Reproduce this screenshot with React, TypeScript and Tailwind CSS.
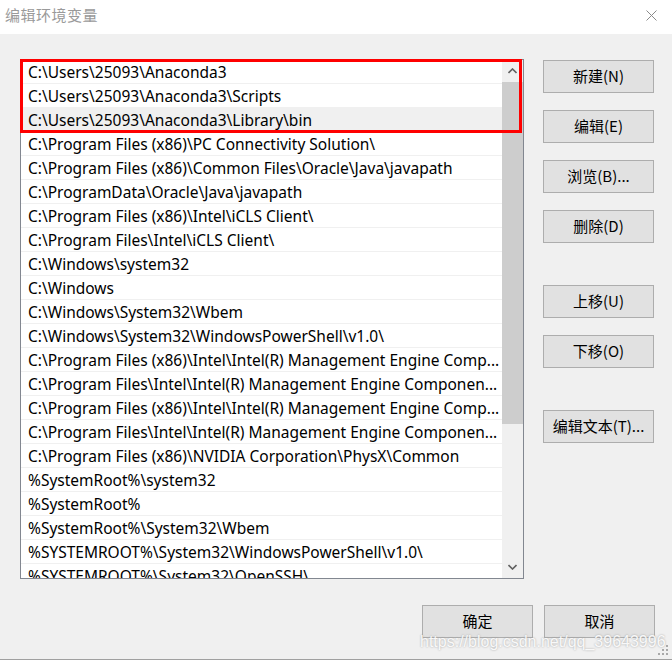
import React from "react";

const rows = [
  "C:\\Users\\25093\\Anaconda3",
  "C:\\Users\\25093\\Anaconda3\\Scripts",
  "C:\\Users\\25093\\Anaconda3\\Library\\bin",
  "C:\\Program Files (x86)\\PC Connectivity Solution\\",
  "C:\\Program Files (x86)\\Common Files\\Oracle\\Java\\javapath",
  "C:\\ProgramData\\Oracle\\Java\\javapath",
  "C:\\Program Files (x86)\\Intel\\iCLS Client\\",
  "C:\\Program Files\\Intel\\iCLS Client\\",
  "C:\\Windows\\system32",
  "C:\\Windows",
  "C:\\Windows\\System32\\Wbem",
  "C:\\Windows\\System32\\WindowsPowerShell\\v1.0\\",
  "C:\\Program Files (x86)\\Intel\\Intel(R) Management Engine Comp...",
  "C:\\Program Files\\Intel\\Intel(R) Management Engine Componen...",
  "C:\\Program Files (x86)\\Intel\\Intel(R) Management Engine Comp...",
  "C:\\Program Files\\Intel\\Intel(R) Management Engine Componen...",
  "C:\\Program Files (x86)\\NVIDIA Corporation\\PhysX\\Common",
  "%SystemRoot%\\system32",
  "%SystemRoot%",
  "%SystemRoot%\\System32\\Wbem",
  "%SYSTEMROOT%\\System32\\WindowsPowerShell\\v1.0\\",
  "%SYSTEMROOT%\\System32\\OpenSSH\\",
];

function Btn({ label, className = "" }: { label: string; className?: string }) {
  return (
    <div
      className={
        "w-[111px] h-[33px] border border-[#adadad] bg-[#e1e1e1] flex items-center justify-center text-[15px] text-black " +
        className
      }
    >
      {label}
    </div>
  );
}

export default function App() {
  return (
    <div
      className="relative w-[672px] h-[660px] bg-[#f0f0f0] border-b border-[#a0a0a0] overflow-hidden"
      style={{ fontFamily: "'Noto Sans', 'Noto Sans CJK SC', sans-serif" }}
    >
      {/* Title bar */}
      <div className="h-[34px] bg-white flex items-center justify-between pl-[5px] pr-[15px]">
        <span
          className="text-[15px] text-[#9a9a9a] tracking-[0.5px] mb-[3px]"
          style={{ fontFamily: "'Noto Sans CJK SC', sans-serif" }}
        >
          编辑环境变量
        </span>
        <svg width="11" height="11" viewBox="0 0 11 11" className="mb-[3px]">
          <path d="M0.5 0.5 L10.5 10.5 M10.5 0.5 L0.5 10.5" stroke="#8a8a8a" strokeWidth="1" />
        </svg>
      </div>

      <div className="flex">
        {/* List */}
        <div className="relative ml-[20px] mt-[25px] w-[504px] h-[520px] border border-[#828790] bg-white flex">
          <div className="w-[481px] h-full overflow-hidden">
            {rows.map((r, i) => (
              <div
                key={i}
                className={
                  "h-[24px] border-b border-[#f0f0f0] pl-[7px] pt-[1px] text-[15.5px] leading-[23px] text-black whitespace-nowrap overflow-hidden " +
                  (i === 2 ? "bg-[#f0f0f0]" : "bg-white")
                }
              >
                {r}
              </div>
            ))}
          </div>
          {/* Scrollbar */}
          <div className="w-[21px] h-full bg-[#f0f0f0] flex flex-col">
            <div className="h-[22px] flex items-center justify-center">
              <svg width="9" height="6" viewBox="0 0 9 6">
                <path d="M0.5 5 L4.5 1 L8.5 5" stroke="#606060" strokeWidth="1.6" fill="none" />
              </svg>
            </div>
            <div className="h-[342px] bg-[#cdcdcd]" />
            <div className="flex-1" />
            <div className="h-[22px] flex items-center justify-center">
              <svg width="9" height="6" viewBox="0 0 9 6">
                <path d="M0.5 1 L4.5 5 L8.5 1" stroke="#606060" strokeWidth="1.6" fill="none" />
              </svg>
            </div>
          </div>
          {/* Red annotation */}
          <div className="absolute left-[-1px] top-[-1px] w-[502px] h-[74px] border-[3px] border-[#ff0000] pointer-events-none" />
        </div>

        {/* Right buttons */}
        <div className="ml-[19px] mt-[26px] flex flex-col" style={{ fontFamily: "'Noto Sans CJK SC', sans-serif" }}>
          <Btn label="新建(N)" />
          <Btn label="编辑(E)" className="mt-[17px]" />
          <Btn label="浏览(B)..." className="mt-[17px]" />
          <Btn label="删除(D)" className="mt-[17px]" />
          <Btn label="上移(U)" className="mt-[42px]" />
          <Btn label="下移(O)" className="mt-[17px]" />
          <Btn label="编辑文本(T)..." className="mt-[42px]" />
        </div>
      </div>

      {/* Bottom buttons */}
      <div className="flex justify-end gap-[11px] pr-[17px] mt-[26px]" style={{ fontFamily: "'Noto Sans CJK SC', sans-serif" }}>
        <Btn label="确定" />
        <Btn label="取消" />
      </div>

      {/* Watermark */}
      <div
        className="absolute left-[420px] top-[630px] text-[16px] text-white/90 [text-shadow:0_0_2px_#9a9a9a] whitespace-nowrap"
        style={{ fontFamily: "'Liberation Sans', sans-serif" }}
      >
        https://blog.csdn.net/qq_39643996
      </div>

      {/* Size grip */}
      <svg className="absolute right-[3px] bottom-[3px]" width="11" height="11" viewBox="0 0 11 11">
        <rect x="8" y="0" width="2" height="2" fill="#a8a8a8" />
        <rect x="4" y="4" width="2" height="2" fill="#a8a8a8" />
        <rect x="8" y="4" width="2" height="2" fill="#a8a8a8" />
        <rect x="0" y="8" width="2" height="2" fill="#a8a8a8" />
        <rect x="4" y="8" width="2" height="2" fill="#a8a8a8" />
        <rect x="8" y="8" width="2" height="2" fill="#a8a8a8" />
      </svg>
    </div>
  );
}
